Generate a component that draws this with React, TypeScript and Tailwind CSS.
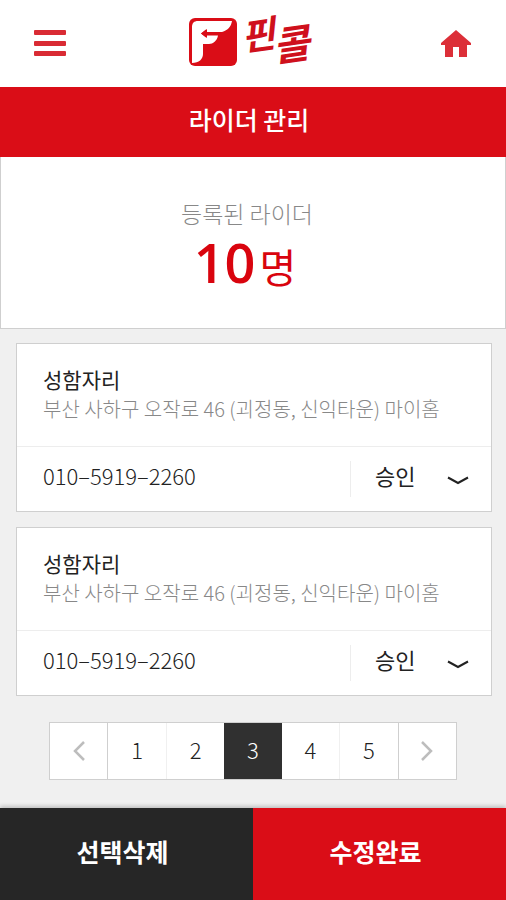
import { useState } from "react";
import { clsx } from "clsx";

interface Rider {
  id: number;
  name: string;
  address: string;
  phone: string;
}

const riders: Rider[] = [
  { id: 1, name: "성함자리", address: "부산 사하구 오작로 46 (괴정동, 신익타운) 마이홈", phone: "010–5919–2260" },
  { id: 2, name: "성함자리", address: "부산 사하구 오작로 46 (괴정동, 신익타운) 마이홈", phone: "010–5919–2260" },
];

const pages = [1, 2, 3, 4, 5];

function Logo() {
  return (
    <a href="#" aria-label="핀콜" className="block">
      <svg
        width="148"
        height="68"
        viewBox="-10 -6 148 68"
        className="overflow-visible fill-[#cf101c] font-['Noto_Sans_CJK_KR',sans-serif] font-bold italic"
      >
        <rect x="0" y="2" width="48" height="48" rx="6" fill="#da0d17" />
        <path
          d="M9 5H43C42 11 39 14 33 16H18V13L12 17.500L18 22V19.500H29C28 25 24 28 20 28H14V38C14 43 10 47 3 47V11C3 7 5 5 9 5Z"
          fill="#fff"
        />
        <path d="M12 17.500L17 13.500V16.500H34V18.500H17V21.500Z" fill="#da0d17" />
        <text x="54" y="35" transform="rotate(-8 54 35)" className="text-[37px]">
          핀
        </text>
        <text x="86" y="46" transform="rotate(-8 86 46)" className="text-[40px]">
          콜
        </text>
      </svg>
    </a>
  );
}

function Header() {
  return (
    <header className="flex h-[87px] items-center justify-between bg-white px-7">
      <button type="button" aria-label="메뉴" className="flex w-11 justify-center">
        <svg width="32" height="30" viewBox="0 0 32 30" fill="#d92b34">
          <rect y="1" width="32" height="5" rx="1" />
          <rect y="12" width="32" height="5" rx="1" />
          <rect y="22" width="32" height="5" rx="1" />
        </svg>
      </button>
      <Logo />
      <button type="button" aria-label="홈" className="flex w-11 justify-center">
        <svg width="30" height="28" viewBox="0 0 30 28" fill="#dc2f38">
          <path d="M15 0L30 13V15H26V27H18V17H12V27H4V15H0V13Z" />
        </svg>
      </button>
    </header>
  );
}

function RiderCard({ rider }: { rider: Rider }) {
  return (
    <li className="border border-[#cfcfcf] bg-white">
      <div className="border-b border-[#ededed] px-[26px] pt-5 pb-[22px]">
        <h2 className="text-[21px] leading-[30px] text-[#222]">{rider.name}</h2>
        <p className="text-[20px] leading-[30px] font-light text-[#888]">{rider.address}</p>
      </div>
      <div className="flex h-16 items-center justify-between pr-[22px] pl-[26px]">
        <span className="pb-2 text-[22px] font-light text-[#222]">{rider.phone}</span>
        <div className="relative flex h-9 items-center border-l border-[#ededed]">
          <select
            aria-label={`${rider.name} 상태`}
            defaultValue="승인"
            className="w-[118px] appearance-none bg-transparent pb-2 pl-6 text-[22px] text-[#222]"
          >
            <option>승인</option>
            <option>대기</option>
          </select>
          <svg
            className="pointer-events-none absolute right-0 bottom-3"
            width="22"
            height="9"
            viewBox="0 0 22 9"
            fill="none"
            stroke="#222"
            strokeWidth="2"
          >
            <path d="M1 1.5L11 7L21 1.5" />
          </svg>
        </div>
      </div>
    </li>
  );
}

function Arrow({ d }: { d: string }) {
  return (
    <svg width="12" height="20" viewBox="0 0 12 20" fill="none" stroke="#bdbdbd" strokeWidth="2.5">
      <path d={d} />
    </svg>
  );
}

function Pagination() {
  const [page, setPage] = useState(3);

  return (
    <nav aria-label="페이지" className="mx-auto mt-[26px] flex h-[58px] w-full max-w-[408px] border border-[#cfcfcf] bg-white">
      <button
        type="button"
        aria-label="이전"
        onClick={() => setPage(Math.max(1, page - 1))}
        className="flex flex-1 items-center justify-center border-r border-[#cfcfcf]"
      >
        <Arrow d="M11 1L2 10L11 19" />
      </button>
      {pages.map((n) => (
        <button
          key={n}
          type="button"
          aria-current={n === page ? "page" : undefined}
          onClick={() => setPage(n)}
          className={clsx(
            "flex-1 pb-1 text-[22px] font-light",
            n === page ? "bg-[#303030] text-white" : "text-[#222]",
            n !== page && n !== page - 1 && n !== 5 && "border-r border-[#f0f0f0]"
          )}
        >
          {n}
        </button>
      ))}
      <button
        type="button"
        aria-label="다음"
        onClick={() => setPage(Math.min(5, page + 1))}
        className="flex flex-1 items-center justify-center border-l border-[#cfcfcf]"
      >
        <Arrow d="M1 1L10 10L1 19" />
      </button>
    </nav>
  );
}

export default function App() {
  return (
    <div className="flex min-h-screen flex-col bg-[#f0f0f0] font-['Noto_Sans_CJK_KR',sans-serif]">
      <Header />
      <h1 className="flex h-[70px] items-center justify-center bg-[#da0d17] pr-2 pb-1 text-[25px] font-medium text-white">
        라이더 관리
      </h1>

      {/* Rider count */}
      <section className="border border-t-0 border-[#cfcfcf] bg-white pt-10 pr-3 pb-8 text-center">
        <p className="text-[23px] leading-8 font-light text-[#888]">등록된 라이더</p>
        <p className="flex h-[67px] items-baseline justify-center gap-1 pr-1 text-[#d9040e]">
          <strong className="font-['Open_Sans',sans-serif] text-[54px] leading-[66px] font-semibold">10</strong>
          <span className="text-[40px] leading-[66px]">명</span>
        </p>
      </section>

      <main className="flex-1 pt-[14px] pb-7">
        <ul className="flex flex-col gap-[15px] pr-[14px] pl-4">
          {riders.map((rider) => (
            <RiderCard key={rider.id} rider={rider} />
          ))}
        </ul>
        <Pagination />
      </main>

      <footer className="grid h-[92px] grid-cols-2 text-[25px] font-bold text-white shadow-[0_-2px_4px_rgba(0,0,0,0.2)]">
        <button type="button" className="bg-[#262626] pr-2 pb-1">
          선택삭제
        </button>
        <button type="button" className="bg-[#da0d17] pr-2 pb-1">
          수정완료
        </button>
      </footer>
    </div>
  );
}
